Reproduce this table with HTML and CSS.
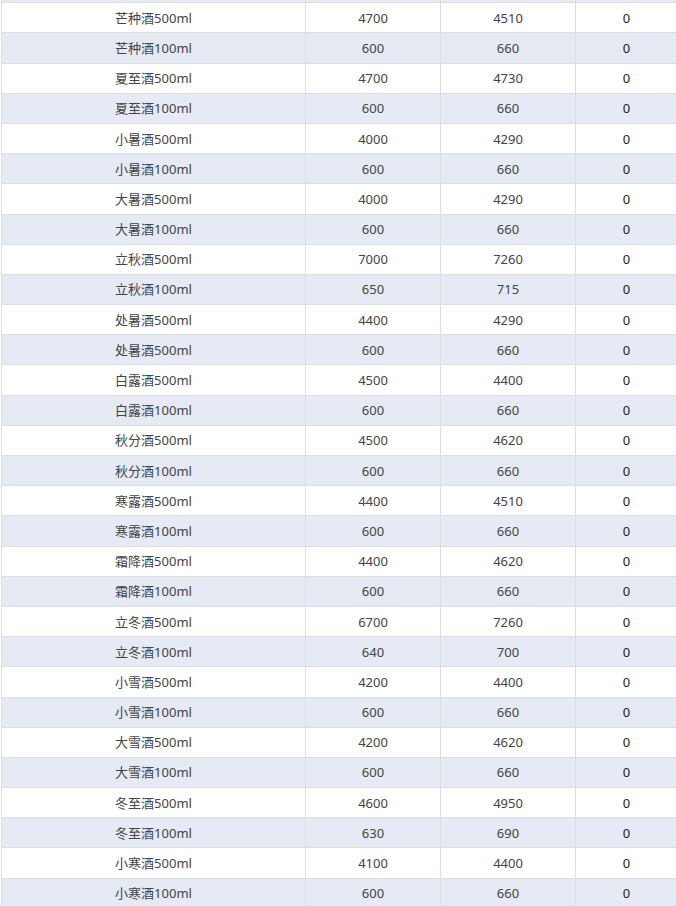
FILE: index.html
```html
<!DOCTYPE html>
<html lang="zh-CN">
<head>
<meta charset="utf-8">
<title>酒品价格表</title>
<link rel="stylesheet" href="styles.css">
</head>
<body>
<div class="viewport">
<table class="price-table">
<colgroup>
<col class="c-name"><col class="c-num"><col class="c-num"><col class="c-last">
</colgroup>
<tbody>
<tr class="scrolled"><td></td><td></td><td></td><td></td></tr>
<tr><td>芒种酒500ml</td><td>4700</td><td>4510</td><td>0</td></tr>
<tr><td>芒种酒100ml</td><td>600</td><td>660</td><td>0</td></tr>
<tr><td>夏至酒500ml</td><td>4700</td><td>4730</td><td>0</td></tr>
<tr><td>夏至酒100ml</td><td>600</td><td>660</td><td>0</td></tr>
<tr><td>小暑酒500ml</td><td>4000</td><td>4290</td><td>0</td></tr>
<tr><td>小暑酒100ml</td><td>600</td><td>660</td><td>0</td></tr>
<tr><td>大暑酒500ml</td><td>4000</td><td>4290</td><td>0</td></tr>
<tr><td>大暑酒100ml</td><td>600</td><td>660</td><td>0</td></tr>
<tr><td>立秋酒500ml</td><td>7000</td><td>7260</td><td>0</td></tr>
<tr><td>立秋酒100ml</td><td>650</td><td>715</td><td>0</td></tr>
<tr><td>处暑酒500ml</td><td>4400</td><td>4290</td><td>0</td></tr>
<tr><td>处暑酒500ml</td><td>600</td><td>660</td><td>0</td></tr>
<tr><td>白露酒500ml</td><td>4500</td><td>4400</td><td>0</td></tr>
<tr><td>白露酒100ml</td><td>600</td><td>660</td><td>0</td></tr>
<tr><td>秋分酒500ml</td><td>4500</td><td>4620</td><td>0</td></tr>
<tr><td>秋分酒100ml</td><td>600</td><td>660</td><td>0</td></tr>
<tr><td>寒露酒500ml</td><td>4400</td><td>4510</td><td>0</td></tr>
<tr><td>寒露酒100ml</td><td>600</td><td>660</td><td>0</td></tr>
<tr><td>霜降酒500ml</td><td>4400</td><td>4620</td><td>0</td></tr>
<tr><td>霜降酒100ml</td><td>600</td><td>660</td><td>0</td></tr>
<tr><td>立冬酒500ml</td><td>6700</td><td>7260</td><td>0</td></tr>
<tr><td>立冬酒100ml</td><td>640</td><td>700</td><td>0</td></tr>
<tr><td>小雪酒500ml</td><td>4200</td><td>4400</td><td>0</td></tr>
<tr><td>小雪酒100ml</td><td>600</td><td>660</td><td>0</td></tr>
<tr><td>大雪酒500ml</td><td>4200</td><td>4620</td><td>0</td></tr>
<tr><td>大雪酒100ml</td><td>600</td><td>660</td><td>0</td></tr>
<tr><td>冬至酒500ml</td><td>4600</td><td>4950</td><td>0</td></tr>
<tr><td>冬至酒100ml</td><td>630</td><td>690</td><td>0</td></tr>
<tr><td>小寒酒500ml</td><td>4100</td><td>4400</td><td>0</td></tr>
<tr><td>小寒酒100ml</td><td>600</td><td>660</td><td>0</td></tr>
</tbody>
</table>
</div>
</body>
</html>
```
FILE: styles.css
```css
html, body {
  margin: 0;
  padding: 0;
  background: #ffffff;
}

.viewport {
  width: 676px;
  height: 906px;
  overflow: hidden;
  padding-left: 1px;
  box-sizing: border-box;
}

.price-table {
  border-collapse: collapse;
  table-layout: fixed;
  width: 677px;
  margin-top: -28px;
  font-family: "Noto Sans", "Noto Sans CJK SC", sans-serif;
  font-size: 13px;
  color: #444;
}

.c-name { width: 304px; }
.c-num { width: 135px; }
.c-last { width: 102px; }

.price-table tr {
  height: 30.2px;
}

.price-table tr:nth-child(odd) {
  background: #e5eaf4;
}

.price-table td {
  border: 1px solid #dcdee3;
  padding: 0;
  text-align: center;
  vertical-align: middle;
  line-height: 18px;
  white-space: nowrap;
}

.price-table td:last-child {
  color: #222;
}
```
